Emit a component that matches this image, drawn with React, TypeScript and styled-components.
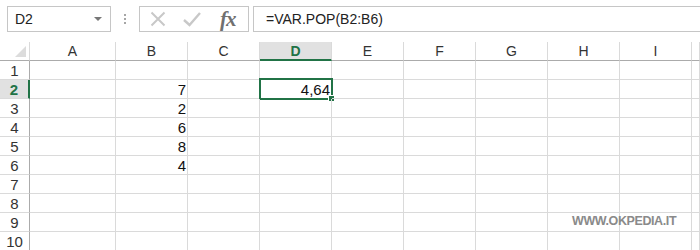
import React from 'react';
import styled, { createGlobalStyle } from 'styled-components';

const GREEN = '#217346';
const GRID = '#dadada';
const columns = ['A', 'B', 'C', 'D', 'E', 'F', 'G', 'H', 'I', ''];
const values: Record<string, string> = {
  'B2': '7', 'B3': '2', 'B4': '6', 'B5': '8', 'B6': '4', 'D2': '4,64',
};
const activeCol = 'D';
const activeRow = 2;

const GlobalStyle = createGlobalStyle`
  html, body { margin: 0; padding: 0; background: #fff; overflow: hidden; }
  body { font-family: "Liberation Sans", Arial, sans-serif; }
`;

const Page = styled.div`
  width: 700px;
  height: 250px;
  position: relative;
  overflow: hidden;
`;

const FormulaBar = styled.div`
  display: flex;
  align-items: stretch;
  height: 26px;
  padding: 6px 0 0 7px;
  margin-bottom: 10px;
`;

const NameBox = styled.div`
  box-sizing: border-box;
  width: 104px;
  display: flex;
  align-items: center;
  justify-content: space-between;
  padding: 0 8px 0 7px;
  border: 1px solid #c6c6c6;
  font-size: 14px;
  color: #222;
`;

const Caret = styled.span`
  width: 0;
  height: 0;
  border-left: 4px solid transparent;
  border-right: 4px solid transparent;
  border-top: 4px solid #777;
`;

const Dots = styled.div`
  width: 28px;
  display: flex;
  flex-direction: column;
  align-items: center;
  justify-content: center;
  gap: 2px;
  span {
    width: 2px;
    height: 2px;
    background: #a6a6a6;
  }
`;

const IconBox = styled.div`
  box-sizing: border-box;
  width: 110px;
  display: flex;
  align-items: center;
  padding-left: 10px;
  gap: 17px;
  border: 1px solid #c6c6c6;
`;

const Fx = styled.span`
  font-family: "Liberation Serif", "Times New Roman", serif;
  font-style: italic;
  font-weight: bold;
  font-size: 21px;
  color: #707070;
  margin-left: 2px;
  letter-spacing: -1px;
`;

const FormulaInput = styled.div`
  flex: 1;
  margin-left: 4px;
  display: flex;
  align-items: center;
  padding-left: 12px;
  border-top: 1px solid #c6c6c6;
  border-bottom: 1px solid #c6c6c6;
  border-left: 1px solid #c6c6c6;
  font-size: 14px;
  color: #222;
`;

const Sheet = styled.div`
  display: grid;
  grid-template-columns: 30px 86px repeat(8, 72px) 1fr;
  grid-template-rows: 19px;
  grid-auto-rows: 19px;
`;

const Corner = styled.div`
  box-sizing: border-box;
  border-right: 1px solid ${GRID};
  border-bottom: 1px solid #ababab;
  display: flex;
  align-items: flex-end;
  justify-content: flex-end;
  padding: 0 3px 3px 0;
`;

const ColHeader = styled.div<{ $active?: boolean }>`
  box-sizing: border-box;
  display: flex;
  align-items: center;
  justify-content: center;
  font-size: 14px;
  color: ${p => (p.$active ? GREEN : '#333')};
  font-weight: ${p => (p.$active ? 'bold' : 'normal')};
  background: ${p => (p.$active ? '#e1e1e1' : '#fff')};
  border-right: 1px solid ${GRID};
  border-bottom: ${p => (p.$active ? `2px solid ${GREEN}` : '1px solid #ababab')};
`;

const RowHeader = styled.div<{ $active?: boolean }>`
  box-sizing: border-box;
  display: flex;
  align-items: center;
  justify-content: center;
  font-size: 15px;
  color: ${p => (p.$active ? GREEN : '#333')};
  font-weight: ${p => (p.$active ? 'bold' : 'normal')};
  background: ${p => (p.$active ? '#e1e1e1' : '#fff')};
  border-right: ${p => (p.$active ? `2px solid ${GREEN}` : '1px solid #ababab')};
  border-bottom: 1px solid ${GRID};
`;

const Cell = styled.div`
  box-sizing: border-box;
  position: relative;
  display: flex;
  align-items: center;
  justify-content: flex-end;
  padding-right: 1px;
  font-size: 15px;
  color: #111;
  border-right: 1px solid ${GRID};
  border-bottom: 1px solid ${GRID};
`;

const Selection = styled.div`
  position: absolute;
  left: -1px;
  top: -2px;
  right: -2px;
  bottom: -2px;
  border: 2px solid ${GREEN};
  pointer-events: none;
`;

const Handle = styled.div`
  position: absolute;
  right: -4px;
  bottom: -4px;
  width: 5px;
  height: 5px;
  background: ${GREEN};
  border: 1px solid #fff;
`;

const Watermark = styled.div`
  position: absolute;
  left: 572px;
  top: 214px;
  font-size: 12.5px;
  font-weight: bold;
  color: #8a8a8a;
  letter-spacing: -0.4px;
`;

export default function App() {
  return (
    <Page>
      <GlobalStyle />
      <FormulaBar>
        <NameBox>
          <span>D2</span>
          <Caret />
        </NameBox>
        <Dots><span /><span /><span /></Dots>
        <IconBox>
          <svg width="16" height="16" viewBox="0 0 16 16">
            <path d="M1.5 1.5 L14.5 14.5 M14.5 1.5 L1.5 14.5" stroke="#c8c8c8" strokeWidth="2" fill="none" />
          </svg>
          <svg width="18" height="16" viewBox="0 0 18 16">
            <path d="M1 9 L6.5 14 L17 2" stroke="#c8c8c8" strokeWidth="2.4" fill="none" />
          </svg>
          <Fx>fx</Fx>
        </IconBox>
        <FormulaInput>=VAR.POP(B2:B6)</FormulaInput>
      </FormulaBar>
      <Sheet>
        <Corner>
          <svg width="11" height="11" viewBox="0 0 11 11">
            <path d="M11 0 L11 11 L0 11 Z" fill="#dcdcdc" />
          </svg>
        </Corner>
        {columns.map((c, i) => (
          <ColHeader key={i} $active={c === activeCol}>{c}</ColHeader>
        ))}
        {Array.from({ length: 10 }, (_, r) => r + 1).map(row => (
          <React.Fragment key={row}>
            <RowHeader $active={row === activeRow}>{row}</RowHeader>
            {columns.map((c, i) => {
              const id = c + row;
              const selected = c === activeCol && row === activeRow;
              return (
                <Cell key={i}>
                  {values[id]}
                  {selected && (
                    <Selection>
                      <Handle />
                    </Selection>
                  )}
                </Cell>
              );
            })}
          </React.Fragment>
        ))}
      </Sheet>
      <Watermark>WWW.OKPEDIA.IT</Watermark>
    </Page>
  );
}
